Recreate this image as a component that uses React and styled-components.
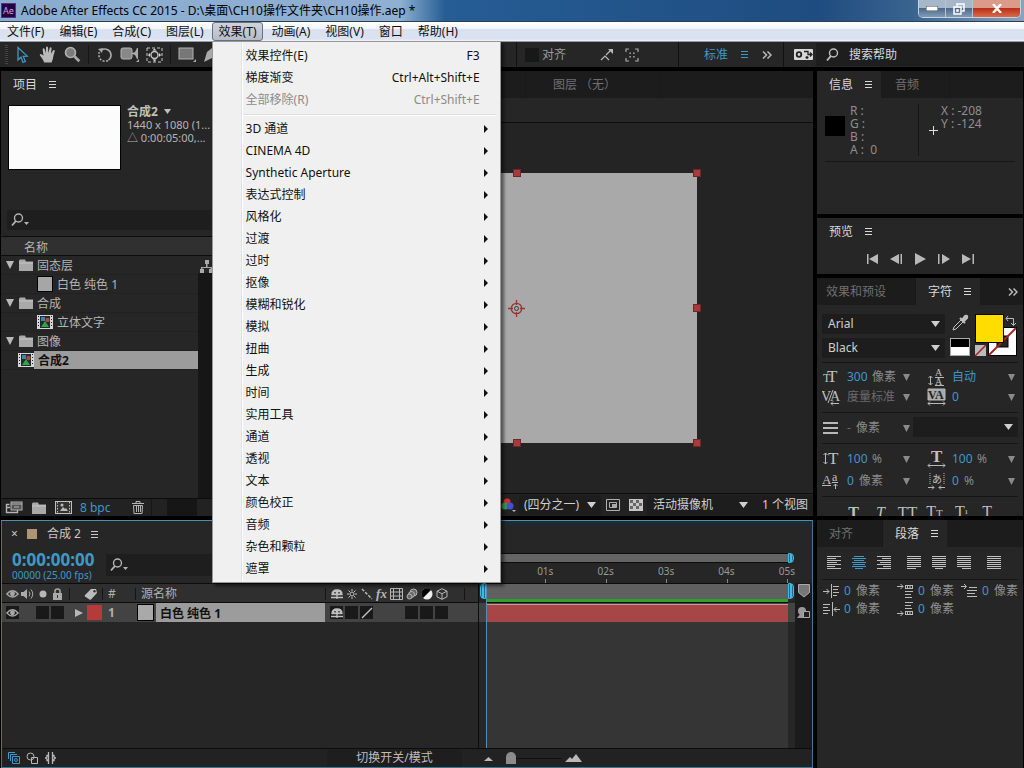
import React from 'react';
import styled, { createGlobalStyle, css } from 'styled-components';

const blue = '#3f98c6';

const menus = ['文件(F)', '编辑(E)', '合成(C)', '图层(L)', '效果(T)', '动画(A)', '视图(V)', '窗口', '帮助(H)'];

const effectCommands = [
  { label: '效果控件(E)', keys: 'F3' },
  { label: '梯度渐变', keys: 'Ctrl+Alt+Shift+E' },
  { label: '全部移除(R)', keys: 'Ctrl+Shift+E', disabled: true },
];

const effectGroups = [
  '3D 通道', 'CINEMA 4D', 'Synthetic Aperture', '表达式控制', '风格化', '过渡', '过时',
  '抠像', '模糊和锐化', '模拟', '扭曲', '生成', '时间', '实用工具', '通道', '透视',
  '文本', '颜色校正', '音频', '杂色和颗粒', '遮罩',
];

const projectItems = [
  { type: 'folder', name: '固态层' },
  { type: 'solid', name: '白色 纯色 1' },
  { type: 'folder', name: '合成' },
  { type: 'comp', name: '立体文字' },
  { type: 'folder', name: '图像' },
  { type: 'comp', name: '合成2', selected: true },
];

/* ---------- icons ---------- */

const Svg = ({ w = 16, h = w, children, ...rest }) => (
  <svg width={w} height={h} viewBox={`0 0 ${w} ${h}`} fill="currentColor" aria-hidden="true" {...rest}>
    {children}
  </svg>
);

const Down = ({ w = 9, h = 6 }) => (
  <Svg w={w} h={h}><path d={`M0 0H${w}L${w / 2} ${h}Z`} /></Svg>
);

const Burger = () => (
  <Svg w={8} h={9}><path d="M0 1h7v1H0zM0 4h7v1H0zM0 7h7v1H0z" /></Svg>
);

const Chevrons = () => (
  <Svg w={10} h={8} fill="none" stroke="currentColor" strokeWidth="1.5"><path d="M1 .5L4.5 4 1 7.5M5.5 .5L9 4 5.5 7.5" /></Svg>
);

const SearchIcon = ({ menu }) => (
  <Svg w={19} h={14} fill="none" stroke="currentColor" strokeWidth="1.4">
    <circle cx="7.5" cy="5" r="4" />
    <path d="M4.8 8.2L1 12.5" strokeWidth="1.8" />
    {menu && <path d="M13 9h5l-2.5 3z" fill="currentColor" stroke="none" />}
  </Svg>
);

const ArrowTool = () => (
  <Svg w={14} h={18} fill="none" stroke="currentColor" strokeWidth="1.3">
    <path d="M2 1.5V14l3-2.8 2 5.3 2.4-1-2.2-5.1 4-.3z" />
  </Svg>
);

const HandTool = () => (
  <Svg w={18} h={17} fill="#b9b9b9">
    <path d="M5.2 16.5C4 13 1 10 .7 8.5c.8-1.2 2-.5 3.8 1.3L3.6 3.2c.2-1.3 1.6-1.3 2-.1L6.9 7 7 1.5c.3-1.4 1.8-1.4 2 0L9.4 7l1.3-5c.5-1.2 1.8-.9 1.9.3L12 7.7l2-3.2c.8-1 2-.4 1.7.8-.7 2.7-1.5 5-1.7 7.2l-1.4 4z" />
  </Svg>
);

const ZoomTool = () => (
  <Svg w={17} h={17}>
    <circle cx="6.5" cy="6.5" r="5" fill="#7c7c7c" stroke="#b0b0b0" strokeWidth="1.6" />
    <path d="M10.3 10.3l5 5" stroke="#a8a8a8" strokeWidth="2.8" />
  </Svg>
);

const RotateTool = () => (
  <Svg w={16} fill="none" stroke="#aaa" strokeWidth="1.6">
    <path d="M4.5 3.2A6 6 0 0 1 14 8c0 2-1 4-2.5 5" />
    <path d="M11 13.500A6 6 0 0 1 2 8V5" strokeDasharray="2 1.5" />
    <path d="M1 2l5-1-1 5z" fill="#aaa" stroke="none" />
  </Svg>
);

const CameraTool = () => (
  <Svg w={20} h={17} fill="#aaa">
    <rect x="1" y="2" width="11" height="11" rx="2" fill="#888" stroke="#b5b5b5" />
    <path d="M12 7l3-1 2-4h1v11h-1l-2-4-3-1zM16 16h3v-3z" />
  </Svg>
);

const PanBehind = () => (
  <Svg w={17} h={16} fill="none" stroke="#c4c4c4">
    <rect x="1" y="1" width="15" height="14" strokeDasharray="3 2" />
    <circle cx="8.5" cy="8" r="3.5" strokeWidth="1.4" />
    <path d="M8.5 1.500l2 2h-4zM8.5 14.500l2-2h-4zM2 8l2-2v4zM15 8l-2-2v4z" fill="#ddd" stroke="none" />
  </Svg>
);

const RectTool = () => (
  <Svg w={18} h={17}>
    <rect x="1" y="2" width="14" height="11" fill="#777" stroke="#b2b2b2" />
    <path d="M15 16h3v-3z" fill="#aaa" />
  </Svg>
);

const PenTool = () => (
  <Svg w={14} h={16} fill="#aaa"><path d="M1 15L4 5l5-4 4 4-4 6z" /></Svg>
);

const SnapEdges = () => (
  <Svg w={14} h={14} fill="none" stroke="#b8b8b8" strokeWidth="1.2">
    <path d="M1 12l4-4 4 4M6 7l5-5" /><path d="M8 1h5v5z" fill="#b8b8b8" stroke="none" />
  </Svg>
);

const SnapFrame = () => (
  <Svg w={14} h={14} fill="none" stroke="#aaa" strokeWidth="1.2">
    <path d="M4 1H1v3M10 1h3v3M4 13H1v-3M10 13h3v-3M5 6V5h1M8 5h1v1M5 8v1h1M8 9h1V8" />
  </Svg>
);

const SyncIcon = () => (
  <Svg w={19} h={11}>
    <rect width="19" height="11" rx="1" fill="#d8d8d8" />
    <circle cx="5" cy="5.5" r="2.3" fill="none" stroke="#222" strokeWidth="1.8" />
    <path d="M10 2.500h4v3h4M16 3.500l2 2-2 2M14.500 8.500h-3M13 7v3" fill="none" stroke="#222" strokeWidth="1.3" />
  </Svg>
);

const Folder = () => (
  <Svg w={14} h={12}>
    <path d="M0 1.5L1 .5h5l1 2h7V12H0z" fill="#a9a9a9" /><path d="M0 4h14" stroke="#c6c6c6" />
  </Svg>
);

const CompIcon = () => (
  <Svg w={16} h={14}>
    <rect width="16" height="14" fill="#d6d6d6" />
    <rect x="3" y="1" width="10" height="12" fill="#1d2b33" />
    <rect x="4" y="2" width="4" height="4" fill="#3c86ae" />
    <circle cx="10.5" cy="5" r="2.2" fill="#b0493a" />
    <path d="M4 12l4-6 4 6z" fill="#3aa044" />
    <path d="M1.5 1v12M14.5 1v12" stroke="#222" strokeDasharray="1 2" />
  </Svg>
);

const Flowchart = () => (
  <Svg w={13} h={13} fill="#aaa"><path d="M5 0h4v4H7.500v3H12v2h1v4h-4V9h1.500V8h-8v1H4v4H0V9h1V7h5V4H5z" /></Svg>
);

const Footage = () => (
  <Svg w={18} h={13} fill="none" stroke="#b5b5b5">
    <path d="M4.5 3.500h-3v8h11v-3M1 6.500h4" strokeWidth="1.4" /><rect x="6" y="1" width="11" height="8" fill="#555" />
    <path d="M6 3h11M9 6h5" />
  </Svg>
);

const NewComp = () => (
  <Svg w={17} h={13}>
    <rect x=".5" y=".5" width="16" height="12" fill="#333" stroke="#c0c0c0" />
    <path d="M2.5 1v11M14.5 1v11" stroke="#c0c0c0" strokeDasharray="1.5 1.5" />
    <path d="M5 10l3-4 2 2 1-1 2 3z" fill="#bbb" /><circle cx="7" cy="4" r="1.5" fill="#bbb" />
  </Svg>
);

const Trash = () => (
  <Svg w={12} h={13} fill="none" stroke="#b5b5b5"><path d="M0 2.500h12M4 2V.5h4V2M1.5 4.500l.5 8h8l.5-8zM4.5 5v6M6.5 5v6M8.5 5v6" /></Svg>
);

const Eye = () => (
  <Svg w={13} h={10} fill="none" stroke="#a8a8a8" strokeWidth="1.3">
    <path d="M.8 5Q6.5-1.5 12.2 5 6.5 11 .8 5z" /><circle cx="6.5" cy="4.8" r="1.8" fill="#a8a8a8" />
  </Svg>
);

const Speaker = () => (
  <Svg w={13} h={12} fill="#aaa"><path d="M0 4h2.500L6 1v10L2.500 8H0z" /><path d="M8 3.500q2 2.500 0 5M10 1.500q3.500 4.500 0 9" fill="none" stroke="#aaa" /></Svg>
);

const Lock = () => (
  <Svg w={9} h={12} fill="#aaa"><path d="M0 5h9v7H0z" /><path d="M2 5V3q0-2 2.500-2T7 3v2" fill="none" stroke="#aaa" strokeWidth="1.5" /><path d="M4 7h1v3H4z" fill="#333" /></Svg>
);

const Tag = () => (
  <Svg w={14} h={12} fill="#bcbcbc"><path d="M1 7l6-6 5 0 1 4-6 6.500q-1 .5-1.500 0L1 8.500Q.5 8 1 7z" /><circle cx="10.5" cy="3.2" r="1.2" fill="#333" /></Svg>
);

const Shy = () => (
  <Svg w={12} h={10} fill="none" stroke="#c0c0c0" strokeWidth="1.3">
    <path d="M1 5.500q0-4.500 5-4.500t5 4.500z" fill="#c0c0c0" /><path d="M0 8.500h12M6 5v5" /><path d="M4 3v1.500M8 3v1.500" stroke="#222" />
  </Svg>
);

const Sun = () => (
  <Svg w={12} h={12} fill="none" stroke="#c0c0c0"><circle cx="6" cy="6" r="2" /><path d="M6 1v2M6 9v2M1 6h2M9 6h2M2.500 2.500L4 4M8 8l1.500 1.500M9.500 2.500L8 4M4 8L2.500 9.500" /></Svg>
);

const Quality = ({ solid }) => (
  <Svg w={12} h={12} stroke="#c0c0c0" strokeWidth="1.4">
    <path d={solid ? 'M1 11L11 1' : 'M1 1l10 10'} strokeDasharray={solid ? undefined : '3 1.5'} />
  </Svg>
);

const Film = () => (
  <Svg w={13} h={12} fill="none" stroke="#b5b5b5"><path d="M.5 .5h12v11H.5zM3.500 0v12M9.500 0v12M0 4h13M0 8h13" /></Svg>
);

const Blur = () => (
  <Svg w={12} h={12} stroke="#b5b5b5" fill="#666"><circle cx="7.5" cy="4.5" r="3.5" /><circle cx="5.5" cy="6.5" r="3" /><circle cx="3.5" cy="8.5" r="2.5" /></Svg>
);

const Adjust = () => (
  <Svg w={12} h={12}><circle cx="6" cy="6" r="5.500" fill="#eee" /><path d="M10 2A5.300 5.300 0 0 0 2 10z" fill="#000" /></Svg>
);

const Cube = () => (
  <Svg w={12} h={12} fill="none" stroke="#b8b8b8"><path d="M6 .7l5 2.500v5.600l-5 2.500-5-2.500V3.200zM1 3.200l5 2.500 5-2.500M6 5.700v5.600" /></Svg>
);

const Lines = ({ rows, color = '#c0c0c0' }) => (
  <Svg w={14} h={14} fill={color}>
    {rows.map(([x, w], i) => <rect key={i} x={x} y={i * 2} width={w} height="1" />)}
  </Svg>
);

const full = [0, 14];
const alignments = [
  ['左对齐', [full, [0, 9], full, [0, 10], full, [0, 8], full]],
  ['居中对齐', [[2, 10], full, [2, 10], full, [1, 12], full, [3, 8]]],
  ['右对齐', [full, [5, 9], full, [3, 11], full, [6, 8], full]],
  ['末行左对齐', [full, full, full, full, full, full, [0, 9]]],
  ['末行居中', [full, full, full, full, full, full, [3, 8]]],
  ['末行右对齐', [full, full, full, full, full, full, [5, 9]]],
  ['全部对齐', [full, full, full, full, full, full, full]],
];

const Indent = ({ kind }) => (
  <Svg w={17} h={14} fill="none" stroke="#bbb">
    {kind === 'left' && <path d="M0 7.5h6M3.5 5L6 7.5 3.5 10M8.5 0v14M10 2.5h6M10 5.5h5M10 8.5h6M10 11.5h4" />}
    {kind === 'right' && <path d="M17 7.5h-6M13.5 5L11 7.5 13.5 10M9.5 0v14M0 2.5h7M0 5.5h5M0 8.5h7M0 11.5h5" />}
    {kind === 'before' && <path d="M0 2.5h6M3.5 0L6 2.5 3.5 5M8 1.500h8M8 4.5h8M8.5 1v4M15.5 1v4M10.500 2v2M13 2v2M8 7.5h8M8 10.5h6M8 13.5h7" />}
    {kind === 'after' && <path d="M0 11.5h6M3.5 9L6 11.5 3.5 14M8 9.5h8M8 12.5h8M8.5 9v4M15.5 9v4M10.500 10v2M13 10v2M8 .5h8M8 3.5h6M8 6.5h7" />}
    {kind === 'first' && <path d="M0 2.5h5M3 0l2.5 2.5L3 5M8 3.5h8M6 6.5h10M6 9.5h8M6 12.5h10" />}
  </Svg>
);

const transport = [
  ['第一帧', 'M1 1h1.5v10H1zM12 1v10L3 6z'],
  ['上一帧', 'M9 1v10L0 6zM10.5 1H12v10h-1.5z'],
  ['播放', 'M1 0l11 6-11 6z'],
  ['下一帧', 'M0 1h1.5v10H0zM4 1l8 5-8 5z'],
  ['最后一帧', 'M0 1l9 5-9 5zM10.5 1H12v10h-1.5z'],
];

const glyph = { fontFamily: 'Liberation Serif', fill: '#c0c0c0', stroke: 'none' };

const CharIcon = ({ kind }) => (
  <Svg w={19} h={18} fill="none" stroke="#b8b8b8">
    {kind === 'size' && <><text {...glyph} x="1" y="14" fontSize="12">T</text><text {...glyph} x="5" y="14" fontSize="17">T</text></>}
    {kind === 'leading' && <><text {...glyph} x="8" y="8" fontSize="10">A</text><text {...glyph} x="8" y="17" fontSize="10">A</text><path d="M8 9.5h9M8 17.5h9M3.5 8v9M1.5 10l2-2 2 2M1.5 15l2 2 2-2" /></>}
    {kind === 'kerning' && <><text {...glyph} x="-1" y="13" fontSize="14">V</text><text {...glyph} x="8" y="13" fontSize="14">A</text><path d="M6 15L11 2M9 15.5h8M11 13.5l-2 2 2 2" /></>}
    {kind === 'tracking' && <><path d="M1 1h17v11H1z" fill="#aaa" /><text x="1" y="11" fontSize="12" fontWeight="bold" fontFamily="Liberation Serif" fill="#222" stroke="none">VA</text><path d="M1 15.5h17M3 13.5l-2 2 2 2M16 13.5l2 2-2 2" /></>}
    {kind === 'stroke' && <path d="M1 4h15M1 9h15M1 14h15" strokeWidth="2" />}
    {kind === 'vscale' && <><text {...glyph} x="6" y="14" fontSize="17">T</text><path d="M3.5 3v11M1.5 5l2-2 2 2M1.5 12l2 2 2-2" /></>}
    {kind === 'hscale' && <><text {...glyph} x="4" y="12" fontSize="17" fontWeight="bold">T</text><path d="M1 15.5h17M3 13.5l-2 2 2 2M16 13.5l2 2-2 2" /></>}
    {kind === 'baseline' && <><text {...glyph} x="0" y="12" fontSize="13">A</text><text {...glyph} x="10" y="9" fontSize="12">a</text><path d="M0 13.5h9M10 10.5h6M13.5 17v-5M11.5 14l2-2 2 2" /></>}
    {kind === 'tsume' && <><text x="5" y="11" fontSize="10" fontFamily="Noto Sans CJK SC" fill="#c0c0c0" stroke="none">あ</text><path d="M3 1v11M17 1v11" strokeDasharray="1 1" /><path d="M1 15.5h6M5 13.5l2 2-2 2M18 15.5h-6M14 13.5l-2 2 2 2" /></>}
  </Svg>
);

/* ---------- shared parts ---------- */

const GlobalStyle = createGlobalStyle`
  *, *::before, *::after { box-sizing: border-box; }
  body {
    margin: 0;
    background: #000;
    color: #b4b4b4;
    font: 12px/16px 'Noto Sans', 'Noto Sans CJK SC', sans-serif;
  }
  button, input, select { font: inherit; color: inherit; margin: 0; }
  button, select { padding: 0; border: 0; background: none; }
  svg { display: block; flex: none; }
  ul { list-style: none; margin: 0; padding: 0; }
`;

const AppWindow = styled.div`
  display: flex;
  flex-direction: column;
  height: 100vh;
  min-height: 640px;
  overflow: hidden;
`;

const Panel = styled.section`
  display: flex;
  flex-direction: column;
  min-width: 0;
  min-height: 0;
  overflow: hidden;
  background: #262626;
`;

const Tabs = styled.div`
  display: flex;
  flex: none;
  height: 27px;
  background: ${p => (p.$plain ? '#262626' : '#1c1c1c')};
`;

const Tab = styled.button`
  display: flex;
  align-items: center;
  gap: 12px;
  padding: 0 0 0 ${p => p.$pad || 12}px;
  width: ${p => p.$w || 'auto'};
  flex: none;
  white-space: nowrap;
  color: ${p => (p.$active ? '#d8d8d8' : '#707070')};
  background: ${p => (p.$active ? '#262626' : 'transparent')};
  border-right: 1px solid ${p => (p.$active ? '#262626' : '#191919')};
`;

const WorkspaceTab = styled.button`
  display: flex;
  align-items: center;
  gap: 13px;
  margin-right: 5px;
  color: ${blue};
`;

const IconButton = styled.button`
  display: flex;
  align-items: center;
  justify-content: center;
  flex: none;
  width: ${p => p.$w || 25}px;
  height: 100%;
  margin-left: ${p => p.$left || 0};
  color: ${p => p.$color || '#b8b8b8'};
`;

const Rule = styled.hr`
  flex: none;
  height: 1px;
  margin: 0 ${p => p.$side || 0}px;
  border: 0;
  background: #151515;
`;

const Picker = styled.label`
  display: grid;
  align-items: center;
  flex: none;
  width: ${p => p.$w || '100%'};
  height: 20px;
  background: #1d1d1d;
  color: #cfcfcf;

  > * { grid-area: 1 / 1; }
  > svg { justify-self: end; margin-right: 5px; pointer-events: none; }
  select {
    appearance: none;
    width: 100%;
    padding-left: ${p => (p.$pad === undefined ? 6 : p.$pad)}px;
  }
`;

const Select = ({ label, options, ...rest }) => (
  <Picker {...rest}>
    <select aria-label={label}>{options.map(o => <option key={o}>{o}</option>)}</select>
    <Down />
  </Picker>
);

/* ---------- title and menus ---------- */

const TitleBar = styled.header`
  display: flex;
  align-items: center;
  flex: none;
  height: 22px;
  padding-right: 3px;
  color: #000;
  background: linear-gradient(90deg, #8aaccf 0, #8fb0d2 400px, #255d94 445px, #1f4c80 80%, #39638f 89%, #89a3bd 100%);
  border-bottom: 1px solid #2b4057;

  h1 { flex: 1; margin: 0; font-size: 12px; font-weight: normal; white-space: nowrap; }
`;

const Logo = styled.span`
  display: grid;
  place-items: center;
  width: 15px;
  height: 15px;
  margin: 0 5px 0 1px;
  background: #24003f;
  border: 1px solid #54308a;
  color: #c9a2ec;
  font-size: 9px;
  line-height: 12px;
`;

const Caption = styled.div`
  display: flex;
  align-self: flex-start;
  height: 18px;
  border: 1px solid #c4d1de;
  border-top: 0;
  border-radius: 0 0 5px 5px;
  overflow: hidden;

  button {
    display: grid;
    place-items: center;
    width: 27px;
    color: #fff;
    border-right: 1px solid #b6c3d1;
    background: linear-gradient(#a6b7c9 45%, #4e6a89 50%, #809bb5);
  }
  button:last-child {
    width: 47px;
    border: 0;
    background: linear-gradient(#dc9a8a 45%, #bb3018 50%, #d9694a);
  }
`;

const MenuBar = styled.nav`
  display: flex;
  gap: 1px;
  flex: none;
  height: 20px;
  color: #111;
  background: linear-gradient(#fff 0, #f2f5fb 35%, #d9e0f0 40%, #dbe2f2 90%, #f5f6fa 100%);
  border-bottom: 1px solid #969aa5;
`;

const MenuSlot = styled.div`
  position: relative;
  display: flex;
`;

const MenuButton = styled.button`
  padding: 0 6px;
  border: 1px solid transparent;
  ${p => p.$open && css`
    border-color: #6c7078;
    border-radius: 3px;
    background: linear-gradient(#cfd3de, #b6bbc9);
  `}
`;

const DropMenu = styled.div`
  position: absolute;
  z-index: 5;
  top: 100%;
  left: 0;
  width: 289px;
  padding: 3px 2px 2px;
  color: #111;
  background: linear-gradient(90deg, transparent 28px, #dfe3e8 28px, #dfe3e8 29px, #fff 29px, #fff 30px, transparent 30px) #f0f0f0;
  border: 1px solid #979797;
  box-shadow: 3px 3px 3px rgba(0, 0, 0, 0.5);
`;

const MenuRow = styled.button`
  display: flex;
  align-items: center;
  justify-content: space-between;
  width: 100%;
  height: 22px;
  padding: 0 ${p => (p.$sub ? 8 : 18)}px 0 31px;
  color: ${p => (p.disabled ? '#8b8b8b' : '#111')};
`;

const MenuRule = styled.hr`
  height: 2px;
  margin: 3px 2px 2px 28px;
  border: 0;
  border-top: 1px solid #dcdcdc;
  background: #fff;
`;

const EffectMenu = () => (
  <DropMenu role="menu">
    {effectCommands.map(c => (
      <MenuRow key={c.label} role="menuitem" disabled={c.disabled}>
        <span>{c.label}</span><span>{c.keys}</span>
      </MenuRow>
    ))}
    <MenuRule />
    {effectGroups.map(name => (
      <MenuRow key={name} role="menuitem" $sub>
        <span>{name}</span>
        <Svg w={7} h={8}><path d="M1 0l4 4-4 4z" /></Svg>
      </MenuRow>
    ))}
  </DropMenu>
);

/* ---------- toolbar ---------- */

const ToolBar = styled.div`
  display: grid;
  grid-template-columns: 1fr 162px 105px 241px;
  flex: none;
  height: 25px;
  background: #262626;
`;

const ToolGroup = styled.div`
  display: flex;
  align-items: center;
  min-width: 0;
  overflow: hidden;
  padding-left: ${p => p.$pad || 0}px;
  border-left: ${p => (p.$line ? '1px solid #111' : 0)};
`;

const Grip = styled.span`
  width: 3px;
  height: 19px;
  margin: 0 2px 0 5px;
  background: repeating-linear-gradient(#484848 0 1px, #1d1d1d 1px 2px);
`;

const Divider = styled.span`
  width: 1px;
  height: 19px;
  margin: 0 3px;
  background: #161616;
`;

const Check = styled.label`
  display: flex;
  align-items: center;
  gap: 3px;
  margin-right: 28px;
  color: #9a9a9a;

  input { appearance: none; width: 14px; height: 14px; background: #181818; }
`;

const HelpSearch = styled.label`
  display: flex;
  align-items: center;
  flex: 1;
  height: 23px;
  padding-left: 10px;
  background: #1e1e1e;
  color: #c0c0c0;

  input { flex: 1; min-width: 0; padding: 0 0 0 4px; border: 0; background: none; }
  input::placeholder { color: #d8d8d8; }
`;

const Tools = () => (
  <ToolBar>
    <ToolGroup>
      <Grip />
      <IconButton $color={blue} aria-label="选取工具"><ArrowTool /></IconButton>
      <IconButton aria-label="手形工具"><HandTool /></IconButton>
      <IconButton aria-label="缩放工具"><ZoomTool /></IconButton>
      <Divider />
      <IconButton aria-label="旋转工具"><RotateTool /></IconButton>
      <IconButton aria-label="摄像机工具"><CameraTool /></IconButton>
      <IconButton aria-label="锚点工具"><PanBehind /></IconButton>
      <Divider />
      <IconButton aria-label="矩形工具"><RectTool /></IconButton>
      <IconButton $w={22} aria-label="钢笔工具"><PenTool /></IconButton>
    </ToolGroup>
    <ToolGroup $line $pad={8}>
      <Check><input type="checkbox" />对齐</Check>
      <IconButton aria-label="边缘对齐"><SnapEdges /></IconButton>
      <IconButton aria-label="对齐框"><SnapFrame /></IconButton>
    </ToolGroup>
    <ToolGroup $line $pad={25}>
      <WorkspaceTab>标准 <Burger /></WorkspaceTab>
      <IconButton aria-label="更多工作区"><Chevrons /></IconButton>
    </ToolGroup>
    <ToolGroup $line $pad={6}>
      <IconButton $w={26} aria-label="同步设置"><SyncIcon /></IconButton>
      <HelpSearch><SearchIcon /><input type="search" placeholder="搜索帮助" aria-label="搜索帮助" /></HelpSearch>
    </ToolGroup>
  </ToolBar>
);

/* ---------- project panel ---------- */

const Preview = styled.div`
  display: grid;
  grid-template-columns: 113px 1fr;
  gap: 6px;
  height: 112px;
  padding: 7px 0 0 7px;
  line-height: 13px;
  white-space: nowrap;
  font-size: 11px;

  strong { display: flex; align-items: center; gap: 6px; font-size: 12px; color: #c0c0c0; }
`;

const Thumb = styled.div`
  height: 65px;
  background: #fcfcfd;
  border: 1px solid #000;
`;

const SearchBox = styled.label`
  display: flex;
  align-items: center;
  height: ${p => p.$h || 20}px;
  margin: ${p => p.$m};
  padding-left: 4px;
  background: #1e1e1e;

  input { flex: 1; min-width: 0; padding: 0; border: 0; background: none; }
`;

const ListHead = styled.div`
  height: 20px;
  padding-left: 23px;
  line-height: 21px;
  background: #303030;
  border: solid #0c0c0c;
  border-width: 1px 0;
`;

const ItemArea = styled.div`
  display: grid;
  grid-template-columns: 197px 1fr;
  flex: 1;
  background: #262626;
`;

const Scroll = styled.div`
  padding: 4px 0 0 2px;
  background: linear-gradient(#262626 17px, #161616 17px);
`;

const Item = styled.li`
  display: flex;
  align-items: center;
  height: 19px;
  padding-left: ${p => p.$indent}px;
  border-bottom: 1px solid #212121;
  color: ${p => (p.$selected ? '#111' : '#b4b4b4')};
  font-weight: ${p => (p.$selected ? 'bold' : 'normal')};

  span { flex: 1; height: 18px; padding-left: 4px; line-height: 20px; background: ${p => (p.$selected ? '#9c9c9c' : 'none')}; }
`;

const Twirl = styled.button`
  display: flex;
  width: 13px;
  color: #b8b8b8;
`;

const Swatch = styled.i`
  display: block;
  flex: none;
  width: ${p => p.$size || 15}px;
  height: ${p => p.$size || 15}px;
  background: ${p => p.$color};
  border: ${p => (p.$flat ? 0 : '1px solid #000')};
`;

const StatusBar = styled.div`
  display: flex;
  align-items: center;
  flex: none;
  height: ${p => p.$h || 18}px;
  justify-content: ${p => (p.$end ? 'flex-end' : 'flex-start')};
  border-top: 1px solid #0c0c0c;
  background: #222;
`;

const Depth = styled.button`
  margin: 0 15px 0 4px;
  color: ${blue};
`;

const HScroll = styled.div`
  flex: 1;
  align-self: stretch;
  border-left: 1px solid #161616;
  background: linear-gradient(90deg, #222 15px, #161616 15px 45px, #222 45px);
`;

const indents = { folder: 5, solid: 36, comp: 36 };

const ProjectPanel = () => (
  <Panel>
    <Tabs $plain><Tab $active>项目 <Burger /></Tab></Tabs>
    <Preview>
      <Thumb />
      <div>
        <strong>合成2 <Down w={7} h={5} /></strong>
        <div>1440 x 1080 (1...</div>
        <div>△ 0:00:05:00,...</div>
      </div>
    </Preview>
    <SearchBox $m="0 0 6px 6px"><SearchIcon menu /><input aria-label="搜索项目" /></SearchBox>
    <ListHead>名称</ListHead>
    <ItemArea>
      <ul>
        {projectItems.map(it => (
          <Item key={it.name} $selected={it.selected} $indent={it.selected ? 17 : indents[it.type]}>
            {it.type === 'folder' && <Twirl aria-label={it.name}><Down w={8} h={8} /></Twirl>}
            {it.type === 'folder' && <Folder />}
            {it.type === 'solid' && <Swatch $size={16} $color="#a6a6a6" />}
            {it.type === 'comp' && <CompIcon />}
            <span>{it.name}</span>
          </Item>
        ))}
      </ul>
      <Scroll><Flowchart /></Scroll>
    </ItemArea>
    <StatusBar>
      <IconButton aria-label="解释素材"><Footage /></IconButton>
      <IconButton aria-label="新建文件夹"><Folder /></IconButton>
      <IconButton aria-label="新建合成"><NewComp /></IconButton>
      <Depth>8 bpc</Depth>
      <IconButton aria-label="删除"><Trash /></IconButton>
      <HScroll />
    </StatusBar>
  </Panel>
);

/* ---------- composition viewer ---------- */

const TabSpace = styled.div`
  width: 306px;
  border-right: 1px solid #191919;
`;

const ViewerHead = styled.div`
  flex: none;
  height: 25px;
  border-bottom: 1px solid #0c0c0c;
`;

const Stage = styled.div`
  display: grid;
  place-items: center;
  flex: 1;
  background: #242424;
`;

const Comp = styled.div`
  position: relative;
  width: 360px;
  height: 270px;
  background: #a9a9a9;
  color: #9c3434;
`;

const Handle = styled.i`
  position: absolute;
  left: ${p => p.$x}%;
  top: ${p => p.$y}%;
  width: 8px;
  height: 8px;
  margin: -4px;
  background: #a93a3a;
  border: 1px solid #6d2929;
`;

const Anchor = styled.span`
  position: absolute;
  inset: 0;
  display: grid;
  place-items: center;
`;

const handles = [[0, 0], [50, 0], [100, 0], [0, 50], [100, 50], [0, 100], [50, 100], [100, 100]];

const Viewer = () => (
  <Panel>
    <Tabs>
      <TabSpace />
      <Tab $w="134px" $pad={27}>图层 （无）</Tab>
    </Tabs>
    <ViewerHead />
    <Stage>
      <Comp>
        {handles.map(([x, y]) => <Handle key={`${x}-${y}`} $x={x} $y={y} />)}
        <Anchor>
          <Svg w={17} h={17} fill="none" stroke="currentColor" strokeWidth="1.3">
            <circle cx="8.5" cy="8.5" r="5.2" /><circle cx="8.5" cy="8.5" r="2" stroke="#222" strokeWidth=".8" /><path d="M8.5 0v5M8.5 12v5M0 8.5h5M12 8.5h5" />
          </Svg>
        </Anchor>
      </Comp>
    </Stage>
    <StatusBar $h={23} $end>
      <IconButton $w={22} aria-label="通道">
        <Svg w={15} h={14}><circle cx="6" cy="4" r="3.5" fill="#d03030" /><circle cx="4" cy="8" r="3.5" fill="#3aa33a" /><circle cx="9" cy="8" r="3.5" fill="#4052d0" /><path d="M11 12h4l-2 2z" /></Svg>
      </IconButton>
      <Select label="分辨率" options={['(四分之一)']} $w="82px" $pad={5} />
      <IconButton $w={24} aria-label="目标区域">
        <Svg w={14} h={12} fill="none" stroke="#b0b0b0"><path d="M.5 .5h13v11H.5zM3.5 3.5h7v5h-7z" /><path d="M6 5h4v3H6z" fill="#aaa" stroke="none" /></Svg>
      </IconButton>
      <IconButton $w={22} aria-label="透明网格">
        <Svg w={14} h={12}><rect width="14" height="12" fill="#c6c6c6" /><path d="M1 1h3v3H1zM7 1h3v3H7zM4 4h3v3H4zM10 4h3v3h-3zM1 7h3v3H1zM7 7h3v3H7z" fill="#666" /></Svg>
      </IconButton>
      <Select label="3D 视图" options={['活动摄像机']} $w="106px" $pad={6} />
      <Picker $w="60px" $pad={9}><select aria-label="视图布局"><option>1 个视图</option></select></Picker>
    </StatusBar>
  </Panel>
);

/* ---------- right dock ---------- */

const PanelBody = styled.div`
  padding: 0 5px;
`;

const InfoBody = styled.div`
  display: grid;
  grid-template-columns: 20px 63px 1fr;
  gap: 5px;
  margin: 0 8px;
  padding: 6px 0 5px;
  border-bottom: 1px solid #161616;
  color: #8f8f8f;
  line-height: 13px;

  > i { margin-top: 12px; }
`;

const Readout = styled.div`
  display: flex;
  align-items: center;
  gap: 3px;
  padding-left: 10px;
  border-left: 1px solid #161616;

  > div { align-self: flex-start; }
`;

const Transport = styled.div`
  display: flex;
  justify-content: center;
  height: 28px;
`;

const CharTop = styled.div`
  display: grid;
  grid-template-columns: 123px 20px 42px;
  gap: 5px;
  padding: 9px 0 4px;
`;

const Stack = styled.div`
  display: grid;
  gap: 4px;
  justify-items: center;
`;

const BlackWhite = styled.button`
  width: 20px;
  height: 18px;
  border: 1px solid #aaa;
  background: linear-gradient(#000 50%, #fff 50%);
`;

const Colors = styled.div`
  position: relative;
  height: 42px;
`;

const Fill = styled.button`
  position: absolute;
  top: 0;
  left: 0;
  width: 29px;
  height: 29px;
  background: #ffdd00;
  border: 1px solid #000;
`;

const PaintIcon = styled.span`
  position: absolute;
  right: ${p => p.$right}px;
  bottom: ${p => p.$bottom}px;
`;

const Fields = styled.div`
  display: grid;
  grid-template-columns: ${p => (p.$wide ? '91px 1fr' : '1fr 1fr')};
  column-gap: ${p => (p.$wide ? 0 : 14)}px;
  grid-auto-rows: ${p => p.$row}px;
  padding: 4px 0 ${p => p.$bottom}px;
`;

const Field = styled.label`
  display: grid;
  grid-template-columns: 25px 1fr 14px;
  align-items: center;
  color: #8a8a8a;
  white-space: nowrap;

  > span { display: flex; gap: 4px; }
  > svg:last-child { justify-self: center; }
`;

const Value = styled.input`
  width: ${p => p.$w}px;
  padding: 0;
  border: 0;
  background: none;
  && { color: ${p => (p.$off ? '#6b6b6b' : blue)}; }
`;

const CharField = ({ icon, label, value, w, unit, off }) => (
  <Field>
    <CharIcon kind={icon} />
    <span><Value aria-label={label} defaultValue={value} $w={w} $off={off} />{unit}</span>
    <Down w={7} h={7} />
  </Field>
);

const StyleRow = styled.div`
  display: flex;
  padding: 6px 0 0 18px;

  button {
    width: 27px;
    flex: none;
    font: 16px/18px 'Liberation Serif', serif;
    color: #c0c0c0;
  }
  small { font-size: 11px; }
`;

const AlignRow = styled.div`
  display: flex;
  height: 32px;
  padding-left: 4px;

  button:nth-child(3), button:nth-child(6) { margin-right: 5px; }
`;

const Indents = styled.div`
  display: grid;
  grid-template-columns: 74px 64px 1fr;
  grid-auto-rows: 18px;
  padding: 2px 0 0 6px;
  color: #8f8f8f;
`;

const IndentField = styled.label`
  display: flex;
  align-items: center;
  gap: 4px;
  white-space: nowrap;
`;

const Para = ({ kind, label }) => (
  <IndentField><Indent kind={kind} /><Value aria-label={label} defaultValue="0" $w={8} />像素</IndentField>
);

const DockColumn = styled.div`
  display: grid;
  grid-template-rows: 143px 56px 238px 1fr;
  gap: 4px;
  min-height: 0;
`;

const Dock = () => (
  <DockColumn>
    <Panel>
      <Tabs><Tab $active $w="64px">信息 <Burger /></Tab><Tab $w="69px" $pad={14}>音频</Tab></Tabs>
      <InfoBody>
        <Swatch $size={20} $color="#000" />
        <div>R :<br />G :<br />B :<br />A :&nbsp; 0</div>
        <Readout>
          <Svg w={9} h={9}><path d="M4 0h1v9H4zM0 4h9v1H0z" fill="#ddd" /></Svg>
          <div>X : -208<br />Y : -124</div>
        </Readout>
      </InfoBody>
    </Panel>
    <Panel>
      <Tabs $plain><Tab $active>预览 <Burger /></Tab></Tabs>
      <Transport>
        {transport.map(([name, d]) => (
          <IconButton key={name} $w={24} aria-label={name}><Svg w={12} h={12}><path d={d} /></Svg></IconButton>
        ))}
      </Transport>
    </Panel>
    <Panel>
      <Tabs>
        <Tab $w="99px" $pad={9}>效果和预设</Tab>
        <Tab $active $w="64px">字符 <Burger /></Tab>
        <IconButton $w={20} $left="auto" aria-label="更多面板"><Chevrons /></IconButton>
      </Tabs>
      <PanelBody>
        <CharTop>
          <Stack>
            <Select label="字体" options={['Arial']} />
            <Select label="字体样式" options={['Black']} />
          </Stack>
          <Stack>
            <Svg w={18} h={18} fill="none" stroke="#c0c0c0"><path d="M2 16l1-3 7-7 2 2-7 7z" /><path d="M9 4l5 5M11 6l3-4q3-1 2 2l-3 3z" fill="#aaa" strokeWidth="2" /></Svg>
            <BlackWhite aria-label="黑白" />
          </Stack>
          <Colors>
            <PaintIcon $right={0} $bottom={0}>
              <Svg w={29} h={29}><rect x=".5" y=".5" width="28" height="28" fill="#fff" stroke="#000" /><rect x="9" y="9" width="11" height="11" fill="#262626" stroke="#000" /><path d="M1 28L28 1" stroke="#a51f1f" strokeWidth="1.8" /></Svg>
            </PaintIcon>
            <Fill aria-label="填充颜色" />
            <PaintIcon $right={1} $bottom={30}>
              <Svg w={11} h={11} fill="none" stroke="#bbb"><path d="M1 3.5h7.5V10M3 1L1 3.5 3 6M6 8l2.5 2.5L11 8" /></Svg>
            </PaintIcon>
            <PaintIcon $right={31} $bottom={0}>
              <Svg w={11} h={11}><rect width="11" height="11" fill="#bbb" /><path d="M0 11L11 0" stroke="#a51f1f" strokeWidth="1.5" /></Svg>
            </PaintIcon>
          </Colors>
        </CharTop>
        <Rule />
        <Fields $row={20} $bottom={5}>
          <CharField icon="size" label="字体大小" value="300" w={21} unit="像素" />
          <CharField icon="leading" label="行距" value="自动" w={26} />
          <CharField icon="kerning" label="字偶间距" value="度量标准" w={50} off />
          <CharField icon="tracking" label="字符间距" value="0" w={8} />
        </Fields>
        <Rule />
        <Fields $wide $row={22} $bottom={4}>
          <CharField icon="stroke" label="描边宽度" value="-" w={5} unit="像素" off />
          <Select label="描边方式" options={['']} />
        </Fields>
        <Rule />
        <Fields $row={22} $bottom={4}>
          <CharField icon="vscale" label="垂直缩放" value="100" w={21} unit="%" />
          <CharField icon="hscale" label="水平缩放" value="100" w={21} unit="%" />
          <CharField icon="baseline" label="基线偏移" value="0" w={8} unit="像素" />
          <CharField icon="tsume" label="比例间距" value="0" w={8} unit="%" />
        </Fields>
        <Rule />
        <StyleRow>
          <button><b>T</b></button>
          <button><i>T</i></button>
          <button>TT</button>
          <button>T<small>T</small></button>
          <button>T<small>¹</small></button>
          <button>T<small>,</small></button>
        </StyleRow>
      </PanelBody>
    </Panel>
    <Panel>
      <Tabs><Tab $w="66px">对齐</Tab><Tab $active $w="64px">段落 <Burger /></Tab></Tabs>
      <AlignRow>
        {alignments.map(([name, rows], i) => (
          <IconButton key={name} aria-label={name}><Lines rows={rows} color={i === 1 ? blue : undefined} /></IconButton>
        ))}
      </AlignRow>
      <Rule $side={5} />
      <Indents>
        <Para kind="left" label="缩进左边距" />
        <Para kind="before" label="段前添加空格" />
        <Para kind="first" label="首行缩进" />
        <Para kind="right" label="缩进右边距" />
        <Para kind="after" label="段后添加空格" />
      </Indents>
    </Panel>
  </DockColumn>
);

/* ---------- timeline ---------- */

const TimelinePanel = styled(Panel)`
  border: 1px solid #397893;
  border-top-color: #4d90ab;
`;

const Panes = styled.div`
  display: grid;
  grid-template-columns: 477px 1fr;
  flex: 1;
  min-height: 0;
`;

const LayerPane = styled.div`
  display: flex;
  flex-direction: column;
  border-right: 1px solid #0c0c0c;
`;

const CompTab = styled.div`
  display: flex;
  align-items: center;
  gap: 10px;
  height: 26px;
  padding-left: 9px;
  color: #c8c8c8;

  button { width: 6px; }
`;

const TimeRow = styled.div`
  display: grid;
  grid-template-columns: 104px 1fr;
  height: 36px;
`;

const TimeCode = styled.button`
  padding: 2px 0 0 10px;
  color: ${blue};
  text-align: left;
  font-size: 10px;
  line-height: 12px;

  strong { display: block; font-size: 17px; line-height: 18px; }
`;

const Columns = styled.div`
  display: grid;
  grid-template-columns: 67px 33px 33px 190px 139px 1fr;
  flex: none;
  align-items: center;
  height: ${p => (p.$head ? 20 : 19)}px;
  color: #b0b0b0;
  background: ${p => (p.$head ? '#2f2f2f' : '#434343')};
  border: solid #0c0c0c;
  border-width: ${p => (p.$head ? '1px 0' : 0)};
`;

const Cell = styled.div`
  display: flex;
  align-items: center;
  height: ${p => (p.$sep ? 12 : 19)}px;
  padding-left: ${p => p.$pad || 0}px;
  border-left: ${p => (p.$sep ? '1px solid #151515' : 0)};
`;

const Slot = styled.button`
  display: grid;
  place-items: center;
  flex: none;
  width: 15px;
  height: 13px;
  border: solid transparent;
  border-width: 0 1px;
  background: ${p => (p.$box ? '#191919' : 'none')};
  background-clip: padding-box;
  color: #b8b8b8;
  font: italic bold 13px/12px 'Liberation Serif', serif;
`;

const LayerName = styled.strong`
  flex: 1;
  height: 19px;
  margin-left: 2px;
  padding-left: 4px;
  line-height: 22px;
  color: #111;
  background: #9c9c9c;
`;

const TrackPane = styled.div`
  position: relative;
  display: flex;
  flex-direction: column;
  background: linear-gradient(#1d2c36, #262626 7px);
`;

const Track = styled.div`
  display: grid;
  grid-template-columns: 7px 1fr 7px 17px;
  flex: ${p => (p.$h ? 'none' : 1)};
  height: ${p => (p.$h ? p.$h + 'px' : 'auto')};
  background: ${p => p.$bg || 'none'};
`;

const Bar = styled.div`
  margin-top: ${p => p.$drop || 0}px;
  background: ${p => p.$color};
  border-top: ${p => p.$top};
  border-bottom: ${p => p.$bottom};
`;

const Grab = styled.button`
  width: 6px;
  justify-self: ${p => (p.$end ? 'start' : 'end')};
  border: 1px solid #46b8e0;
  border-radius: ${p => (p.$end ? '0 4px 4px 0' : '4px 0 0 4px')};
  background: linear-gradient(90deg, #1c6c92 1px, #46b8e0 1px 3px, #1c6c92 3px);
`;

const Ruler = styled.div`
  display: grid;
  grid-template-columns: repeat(5, 1fr);
  font-size: 10px;
  line-height: 16px;
  color: #999;
`;

const Mark = styled.div`
  display: flex;
  flex-direction: column;
  justify-content: space-between;
  align-items: flex-end;

  span { margin-right: -7px; }
  &::after { content: ''; width: 1px; height: 4px; background: #888; }
`;

const Gutter = styled.div`
  display: grid;
  place-items: center;
  grid-column: 4;
  background: #1b1b1b;
`;

const Playhead = styled.i`
  position: absolute;
  top: 63px;
  bottom: 0;
  left: 7px;
  width: 1px;
  background: #5590b4;
`;

const ModeButton = styled.button`
  width: 135px;
  height: 17px;
  margin-left: 266px;
  color: #bdbdbd;
  background: #1e1e1e;
`;

const ZoomRange = styled.input`
  appearance: none;
  width: 56px;
  height: 14px;
  background: linear-gradient(#111, #111) center / 100% 1px no-repeat;

  &::-webkit-slider-thumb {
    appearance: none;
    width: 10px;
    height: 12px;
    background: #8c8c8c;
    border-radius: 5px 5px 0 0;
  }
`;

const edge = '1px solid #0c0c0c';

const Timeline = () => (
  <TimelinePanel>
    <Panes>
      <LayerPane>
        <CompTab>
          <button aria-label="关闭">×</button>
          <Swatch $size={10} $flat $color="#ae9574" />
          <span>合成 2</span>
          <Burger />
        </CompTab>
        <TimeRow>
          <TimeCode><strong>0:00:00:00</strong>00000 (25.00 fps)</TimeCode>
          <SearchBox $h={22} $m="7px 0 0"><SearchIcon menu /><input aria-label="搜索图层" /></SearchBox>
        </TimeRow>
        <Columns $head>
          <Cell $pad={3}>
            <Slot as="span"><Eye /></Slot><Slot as="span"><Speaker /></Slot>
            <Slot as="span"><Svg w={8} h={8}><circle cx="4" cy="4" r="3.5" /></Svg></Slot>
            <Slot as="span"><Lock /></Slot>
          </Cell>
          <Cell $sep $pad={14}><Tag /></Cell>
          <Cell $sep $pad={5}>#</Cell>
          <Cell $sep $pad={5}>源名称</Cell>
          <Cell $sep $pad={3}>
            <Slot as="span"><Shy /></Slot><Slot as="span"><Sun /></Slot><Slot as="span"><Quality /></Slot>
            <Slot as="span">fx</Slot><Slot as="span"><Film /></Slot><Slot as="span"><Blur /></Slot>
            <Slot as="span"><Adjust /></Slot><Slot as="span"><Cube /></Slot>
          </Cell>
          <Cell $sep />
        </Columns>
        <Columns>
          <Cell $pad={3}>
            <Slot $box aria-label="视频"><Eye /></Slot><Slot as="span" />
            <Slot $box aria-label="独奏" /><Slot $box aria-label="锁定" />
          </Cell>
          <Cell $pad={6}>
            <Twirl aria-label="展开"><Svg w={8} h={8}><path d="M0 0l8 4-8 4z" /></Svg></Twirl>
            <Swatch $size={15} $flat $color="#b53a3a" />
          </Cell>
          <Cell $pad={6}><b>1</b></Cell>
          <Cell $pad={2}><Swatch $size={17} $color="#a9a9a9" /><LayerName>白色 纯色 1</LayerName></Cell>
          <Cell $pad={4}>
            <Slot $box aria-label="消隐"><Shy /></Slot><Slot $box aria-label="折叠" /><Slot $box aria-label="质量"><Quality solid /></Slot>
            <Slot as="span" /><Slot as="span" />
            <Slot $box aria-label="运动模糊" /><Slot $box aria-label="调整图层" /><Slot $box aria-label="3D 图层" />
          </Cell>
        </Columns>
      </LayerPane>
      <TrackPane>
        <Track $h={32} />
        <Track $h={10}><span /><Bar $color="#646464" $top={edge} $bottom={edge} /><Grab $end aria-label="时间导航器结束" /></Track>
        <Track $h={20}>
          <span />
          <Ruler>{[1, 2, 3, 4, 5].map(s => <Mark key={s}><span>0{s}s</span></Mark>)}</Ruler>
        </Track>
        <Track $h={16}>
          <Grab aria-label="工作区域开头" /><Bar $color="#606060" $top={edge} /><Grab $end aria-label="工作区域结尾" />
          <Gutter><Svg w={12} h={14}><path d="M.5 .5h11v8L6 13 .5 8.5z" fill="#777" stroke="#aaa" /></Svg></Gutter>
        </Track>
        <Track $h={4}><span /><Bar $color="#2fa02f" $bottom={edge} /><span /><Gutter /></Track>
        <Track $h={19} $bg="#434343">
          <span /><Bar $drop={1} $color="#a64646" $top="1px solid #c99a9a" /><span />
          <Gutter><Svg w={13} h={12} fill="#999"><circle cx="5" cy="4" r="4" /><path d="M0 11l4-5 5 5z" /><path d="M6.5 4.5h6v6h-6z" fill="#222" stroke="#aaa" /></Svg></Gutter>
        </Track>
        <Track><span /><Bar $color="#353535" /><span /><Gutter /></Track>
        <Playhead />
      </TrackPane>
    </Panes>
    <StatusBar $h={19}>
      <IconButton $w={23} $color={blue} aria-label="图层开关"><Svg w={12} h={12} fill="none" stroke="currentColor"><path d="M.5 7V.5H7M2.5 9V2.5H9M4.5 4.5h7v7h-7z" /><circle cx="8" cy="8" r="1.5" /></Svg></IconButton>
      <IconButton $w={14} aria-label="转换控制"><Svg w={12} h={12} fill="none" stroke="currentColor"><circle cx="4.5" cy="4.5" r="3.5" /><path d="M5.5 5.5h6v6h-6z" /></Svg></IconButton>
      <IconButton $w={22} aria-label="入点出点"><Svg w={11} h={12} fill="none" stroke="currentColor"><path d="M3.5 0v12M7.5 0v12M3 3.5H2V5L.5 6 2 7v1.500h1M8 3.5h1V5l1.500 1L9 7v1.500H8" strokeWidth="1.3" /></Svg></IconButton>
      <ModeButton>切换开关/模式</ModeButton>
      <IconButton $w={36} $left="8px" aria-label="缩小"><Svg w={9} h={5}><path d="M0 5l4.5-4L9 5z" /></Svg></IconButton>
      <ZoomRange type="range" defaultValue="0" aria-label="时间缩放" />
      <IconButton $w={22} aria-label="放大"><Svg w={17} h={8}><path d="M0 8l5-5 2 2 4-5 6 8z" /></Svg></IconButton>
    </StatusBar>
  </TimelinePanel>
);

/* ---------- page ---------- */

const Workspace = styled.main`
  display: grid;
  grid-template-columns: minmax(0, 1fr) 206px;
  gap: 4px;
  flex: 1;
  min-height: 0;
  padding: 4px 1px 0;
`;

const MainColumn = styled.div`
  display: grid;
  grid-template-rows: 445px minmax(0, 1fr);
  gap: 4px;
  min-height: 0;
`;

const TopRow = styled.div`
  display: grid;
  grid-template-columns: 215px minmax(0, 1fr);
  gap: 4px;
  min-height: 0;
`;

const App = () => {
  return (
    <>
      <GlobalStyle />
      <AppWindow>
        <TitleBar>
          <Logo>Ae</Logo>
          <h1>Adobe After Effects CC 2015 - D:\桌面\CH10操作文件夹\CH10操作.aep *</h1>
          <Caption>
            <button aria-label="最小化"><Svg w={12} h={5}><path d="M0 0h12v5H0z" stroke="#445" /></Svg></button>
            <button aria-label="还原"><Svg w={12} h={12} fill="none" stroke="#fff" strokeWidth="1.5"><path d="M4 3V1h7v7H9M1 4h7v7H1z" /><path d="M4 7h1v1H4z" /></Svg></button>
            <button aria-label="关闭"><Svg w={10} h={9} stroke="#fff" strokeWidth="2.4"><path d="M1 0l8 9M9 0L1 9" /></Svg></button>
          </Caption>
        </TitleBar>
        <MenuBar>
          {menus.map(m => (
            <MenuSlot key={m}>
              <MenuButton $open={m === '效果(T)'}>{m}</MenuButton>
              {m === '效果(T)' && <EffectMenu />}
            </MenuSlot>
          ))}
        </MenuBar>
        <Tools />
        <Workspace>
          <MainColumn>
            <TopRow>
              <ProjectPanel />
              <Viewer />
            </TopRow>
            <Timeline />
          </MainColumn>
          <Dock />
        </Workspace>
      </AppWindow>
    </>
  );
};

export default App;
